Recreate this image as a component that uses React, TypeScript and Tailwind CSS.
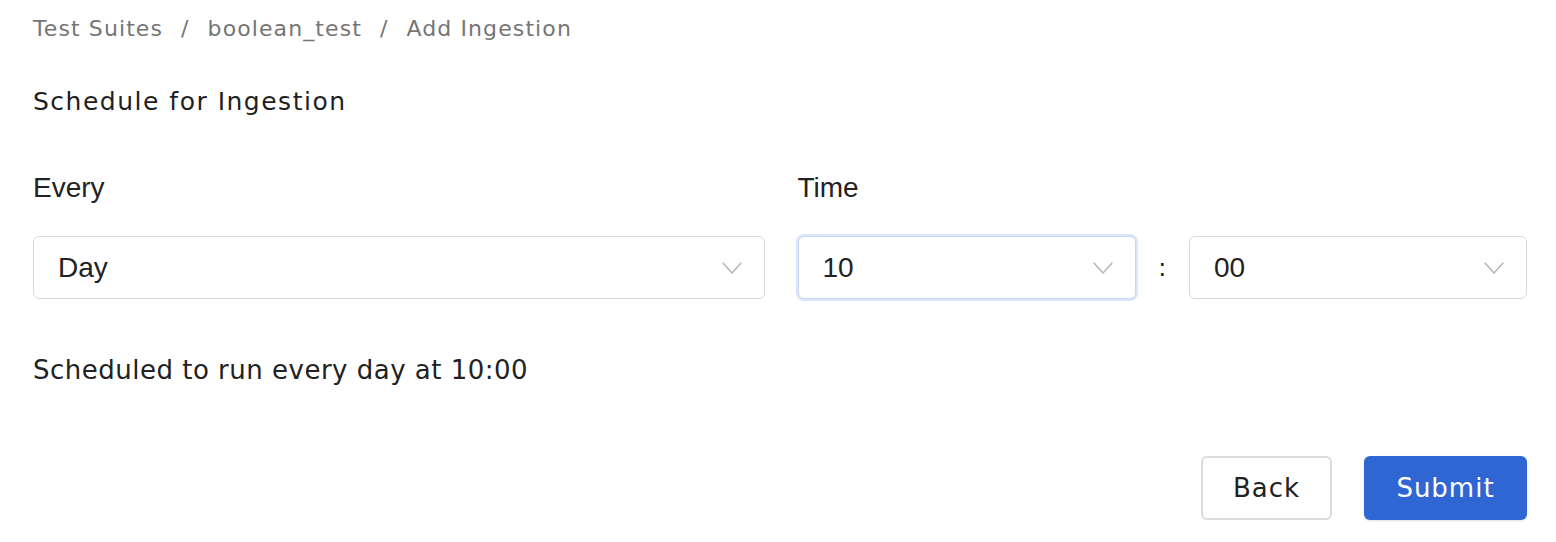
const sans = "font-['DejaVu_Sans',sans-serif]";
const narrow = "font-['Liberation_Sans',sans-serif]";

function Chevron() {
  return (
    <svg width="20" height="12" viewBox="0 0 20 12" fill="none" className="shrink-0">
      <path d="M1 1l9 10 9-10" stroke="#b3b3b3" strokeWidth="1.4" strokeLinecap="round" strokeLinejoin="round" />
    </svg>
  );
}

function Select({ value, focused = false }: { value: string; focused?: boolean }) {
  return (
    <div
      className={
        'flex h-[63px] items-center justify-between rounded-[6px] border bg-white pl-6 pr-[22px] ' +
        (focused ? 'border-[#c7d7f5] ring-2 ring-[#dbe6fa]' : 'border-[#d9d9d9]')
      }
    >
      <span className={`${narrow} text-[28px] text-[#222]`}>{value}</span>
      <Chevron />
    </div>
  );
}

export default function App() {
  return (
    <div className={`${sans} min-h-[542px] bg-white pl-[33px] pr-[29px] pt-[14px] text-[#222]`}>
      <nav className="flex items-center gap-[18px] text-[22px] leading-[30px] tracking-[1.1px] text-[#757575]">
        <span>Test Suites</span>
        <span>/</span>
        <span>boolean_test</span>
        <span>/</span>
        <span>Add Ingestion</span>
      </nav>

      <h2 className="mt-[40px] text-[25px] leading-[36px] tracking-[1.5px] text-[#1f1f1f]">Schedule for Ingestion</h2>

      <div className="mt-[50px] grid grid-cols-2 gap-[31px]">
        <div>
          <label className={`${narrow} block text-[28px] leading-[36px]`}>Every</label>
          <div className="mt-[30px]">
            <Select value="Day" />
          </div>
        </div>
        <div>
          <label className={`${narrow} block text-[28px] leading-[36px] pl-[2px]`}>Time</label>
          <div className="mt-[30px] flex items-center">
            <div className="w-[340px] pl-[2px]">
              <Select value="10" focused />
            </div>
            <span className="flex-1 text-center text-[24px]">:</span>
            <div className="w-[338px]">
              <Select value="00" />
            </div>
          </div>
        </div>
      </div>

      <p className="mt-[52px] text-[26px] leading-[38px] tracking-[0.5px]">Scheduled to run every day at 10:00</p>

      <div className="mt-[67px] flex justify-end gap-8">
        <button className="h-[64px] w-[131px] rounded-[6px] border-2 border-[#dcdcdc] bg-white text-[26px] tracking-[1px] text-[#222]">
          Back
        </button>
        <button className="h-[64px] w-[163px] rounded-[6px] bg-[#2f66d4] text-[26px] tracking-[1px] text-white shadow-sm">
          Submit
        </button>
      </div>
    </div>
  );
}
